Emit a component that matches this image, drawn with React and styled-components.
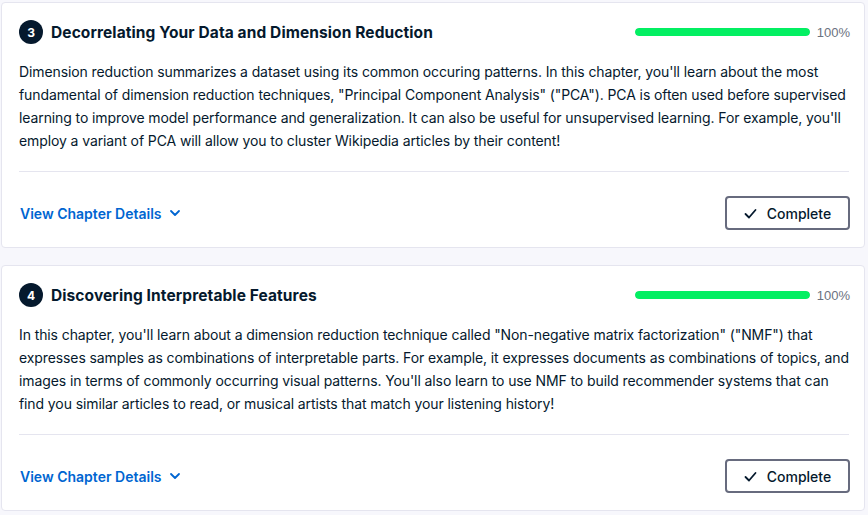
import React from "react";
import styled, { createGlobalStyle } from "styled-components";

const GlobalStyle = createGlobalStyle`
  body {
    margin: 0;
    background: #f7f7fc;
    font-family: Inter, "Noto Sans", sans-serif;
    color: #05192d;
  }
`;

const Page = styled.div`
  padding: 2px 3px 0 1px;
  display: flex;
  flex-direction: column;
  gap: 17px;
`;

const Card = styled.section`
  background: #ffffff;
  border: 1px solid #e5e5ef;
  border-radius: 4px;
  padding: 15px 15px 17px 16px;
`;

const Header = styled.div`
  display: flex;
  align-items: center;
  height: 28px;
`;

const Badge = styled.span`
  width: 24px;
  height: 24px;
  border-radius: 50%;
  background: #05192d;
  color: #fff;
  font-size: 12px;
  font-weight: 700;
  display: flex;
  align-items: center;
  justify-content: center;
  margin: 0 8px 0 1px;
`;

const Title = styled.h3`
  margin: 0;
  flex: 1;
  font-size: 15.5px;
  font-weight: 700;
  letter-spacing: 0.1px;
`;

const Progress = styled.div`
  display: flex;
  align-items: center;
  gap: 7px;
  margin-right: -1px;
`;

const Track = styled.div`
  width: 175px;
  height: 8px;
  border-radius: 4px;
  background: #e5e5ef;
  overflow: hidden;
`;

const Fill = styled.div`
  height: 100%;
  background: #03ef62;
  border-radius: 4px;
`;

const Percent = styled.span`
  font-family: "Liberation Sans", Arial, sans-serif;
  font-size: 13px;
  color: #6b7280;
`;

const Description = styled.p`
  margin: 14px 0 0 1px;
  font-size: 14px;
  line-height: 23px;
  letter-spacing: -0.1px;
  color: #05192d;
`;

const Divider = styled.hr`
  border: none;
  border-top: 1px solid #e5e5ef;
  margin: 19px 0 24px 1px;
`;

const Footer = styled.div`
  display: flex;
  align-items: center;
  justify-content: space-between;
  height: 34px;
`;

const DetailsLink = styled.button`
  border: none;
  background: none;
  padding: 0 0 0 2px;
  display: flex;
  align-items: center;
  gap: 8px;
  font-family: inherit;
  font-size: 14px;
  font-weight: 600;
  color: #0065d1;
  cursor: pointer;
`;

const CompleteButton = styled.button`
  height: 34px;
  width: 125px;
  border: 2px solid #676b7e;
  border-radius: 4px;
  background: #fff;
  display: flex;
  align-items: center;
  justify-content: center;
  gap: 10px;
  font-family: inherit;
  font-size: 14px;
  font-weight: 500;
  color: #05192d;
  margin-right: -1px;
`;

const Chevron = () => (
  <svg width="12" height="12" viewBox="0 0 12 12" fill="none">
    <path d="M2 4l4 4 4-4" stroke="#0065d1" strokeWidth="1.8" strokeLinecap="round" strokeLinejoin="round" />
  </svg>
);

const Check = () => (
  <svg width="13" height="13" viewBox="0 0 13 13" fill="none">
    <path d="M1.5 7l3.5 3.5L11.5 3" stroke="#05192d" strokeWidth="1.8" strokeLinecap="round" strokeLinejoin="round" />
  </svg>
);

const chapters = [
  {
    n: 3,
    title: "Decorrelating Your Data and Dimension Reduction",
    text:
      "Dimension reduction summarizes a dataset using its common occuring patterns. In this chapter, you'll learn about the most fundamental of dimension reduction techniques, \"Principal Component Analysis\" (\"PCA\"). PCA is often used before supervised learning to improve model performance and generalization. It can also be useful for unsupervised learning. For example, you'll employ a variant of PCA will allow you to cluster Wikipedia articles by their content!",
  },
  {
    n: 4,
    title: "Discovering Interpretable Features",
    text:
      "In this chapter, you'll learn about a dimension reduction technique called \"Non-negative matrix factorization\" (\"NMF\") that expresses samples as combinations of interpretable parts. For example, it expresses documents as combinations of topics, and images in terms of commonly occurring visual patterns. You'll also learn to use NMF to build recommender systems that can find you similar articles to read, or musical artists that match your listening history!",
  },
];

export default function App() {
  return (
    <>
      <GlobalStyle />
      <Page>
        {chapters.map((c) => (
          <Card key={c.n}>
            <Header>
              <Badge>{c.n}</Badge>
              <Title>{c.title}</Title>
              <Progress>
                <Track>
                  <Fill style={{ width: "100%" }} />
                </Track>
                <Percent>100%</Percent>
              </Progress>
            </Header>
            <Description>{c.text}</Description>
            <Divider />
            <Footer>
              <DetailsLink>
                View Chapter Details
                <Chevron />
              </DetailsLink>
              <CompleteButton>
                <Check />
                Complete
              </CompleteButton>
            </Footer>
          </Card>
        ))}
      </Page>
    </>
  );
}
